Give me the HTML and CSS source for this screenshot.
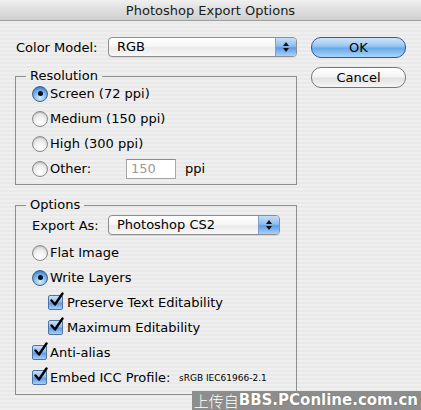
FILE: index.html
```html
<!DOCTYPE html>
<html>
<head>
<meta charset="utf-8">
<link rel="stylesheet" href="styles.css">
</head>
<body>
<div class="window">
  <div class="titlebar">Photoshop Export Options</div>
  <div class="main">
    <div class="left">
      <div class="model-row">
        <span class="model-label">Color Model:</span>
        <div class="popup popup-model">
          <span class="popup-text">RGB</span>
          <span class="popup-arrows"><svg width="8" height="12" viewBox="0 0 8 12"><path d="M4 1 L7 5 L1 5 Z" fill="#111"/><path d="M1 7 L7 7 L4 11 Z" fill="#111"/></svg></span>
        </div>
      </div>

      <fieldset class="group group-res">
        <legend>Resolution</legend>
        <div class="rows">
          <div class="opt"><span class="radio on"></span><span>Screen (72 ppi)</span></div>
          <div class="opt"><span class="radio"></span><span>Medium (150 ppi)</span></div>
          <div class="opt"><span class="radio"></span><span>High (300 ppi)</span></div>
          <div class="opt"><span class="radio"></span><span class="other-label">Other:</span><span class="field">150</span><span class="unit">ppi</span></div>
        </div>
      </fieldset>

      <fieldset class="group group-opt">
        <legend>Options</legend>
        <div class="export-row">
          <span class="export-label">Export As:</span>
          <div class="popup popup-export">
            <span class="popup-text">Photoshop CS2</span>
            <span class="popup-arrows"><svg width="8" height="12" viewBox="0 0 8 12"><path d="M4 1 L7 5 L1 5 Z" fill="#111"/><path d="M1 7 L7 7 L4 11 Z" fill="#111"/></svg></span>
          </div>
        </div>
        <div class="rows rows-opt">
          <div class="opt"><span class="radio"></span><span>Flat Image</span></div>
          <div class="opt"><span class="radio on"></span><span>Write Layers</span></div>
          <div class="opt nested"><span class="check"><svg width="17" height="17" viewBox="0 0 17 17"><path d="M3.5 8.5 L7 12.5 L14.5 1.5" fill="none" stroke="#000" stroke-width="2.4" stroke-linecap="round" stroke-linejoin="round"/></svg></span><span>Preserve Text Editability</span></div>
          <div class="opt nested"><span class="check"><svg width="17" height="17" viewBox="0 0 17 17"><path d="M3.5 8.5 L7 12.5 L14.5 1.5" fill="none" stroke="#000" stroke-width="2.4" stroke-linecap="round" stroke-linejoin="round"/></svg></span><span>Maximum Editability</span></div>
          <div class="opt"><span class="check top"><svg width="17" height="17" viewBox="0 0 17 17"><path d="M3.5 8.5 L7 12.5 L14.5 1.5" fill="none" stroke="#000" stroke-width="2.4" stroke-linecap="round" stroke-linejoin="round"/></svg></span><span>Anti-alias</span></div>
          <div class="opt"><span class="check top"><svg width="17" height="17" viewBox="0 0 17 17"><path d="M3.5 8.5 L7 12.5 L14.5 1.5" fill="none" stroke="#000" stroke-width="2.4" stroke-linecap="round" stroke-linejoin="round"/></svg></span><span class="embed-label">Embed ICC Profile:</span><span class="profile">sRGB IEC61966-2.1</span></div>
        </div>
      </fieldset>
    </div>

    <div class="buttons">
      <div class="btn btn-ok">OK</div>
      <div class="btn btn-cancel">Cancel</div>
    </div>
  </div>
  <div class="watermark"><span class="wm-cjk">上传自</span><span class="wm-latin">BBS.PConline.com.cn</span></div>
</div>
</body>
</html>
```

FILE: styles.css
```css
html, body {
  margin: 0;
  padding: 0;
}

body {
  font-family: "DejaVu Sans", "Noto Sans CJK SC", sans-serif;
  font-size: 13px;
  color: #000;
  background: #ececec;
}

.window {
  position: relative;
  width: 421px;
  height: 410px;
  overflow: hidden;
  background: repeating-linear-gradient(to bottom, #efefef 0, #efefef 2px, #e9e9e9 2px, #e9e9e9 4px);
}

.titlebar {
  height: 20px;
  line-height: 21px;
  text-align: center;
  color: #1a1a1a;
  background: linear-gradient(to bottom, #f0f0f0 0%, #dedede 50%, #cfcfcf 100%);
  border-bottom: 1px solid #9c9c9c;
  border-radius: 5px 5px 0 0;
}

.main {
  display: flex;
  gap: 14px;
  padding: 16px 0 0 15px;
}

.left {
  width: 282px;
  display: flex;
  flex-direction: column;
}

.model-row {
  display: flex;
  align-items: center;
  height: 20px;
}

.model-label {
  width: 92px;
  padding-left: 1px;
}

/* popup buttons */
.popup {
  display: flex;
  height: 18px;
  border: 1px solid #8e8e8e;
  border-radius: 4px;
  background: linear-gradient(to bottom, #ffffff 0%, #f6f6f6 45%, #eaeaea 55%, #f8f8f8 100%);
  box-shadow: 0 1px 0 rgba(0,0,0,0.08);
  overflow: hidden;
}

.popup-model {
  width: 187px;
}

.popup-export {
  width: 170px;
}

.popup-text {
  flex: 1;
  line-height: 18px;
  padding-left: 8px;
}

.popup-arrows {
  width: 20px;
  display: flex;
  align-items: center;
  justify-content: center;
  border-left: 1px solid #7d9fc9;
  background: linear-gradient(to bottom, #c7def7 0%, #8fbdf0 45%, #5f9ce6 55%, #a9d1fa 100%);
}

/* group boxes */
.group {
  margin: 12px 0 0 0;
  padding: 0 0 3px 0;
  min-width: 0;
  border: 1px solid #8e8e8e;
}

.group legend {
  margin-left: 10px;
  padding: 0 4px;
  line-height: 14px;
}

.rows {
  display: flex;
  flex-direction: column;
  margin-top: -2px;
}

.rows-opt {
  margin-top: 3px;
}

.group-opt {
  margin-top: 13px;
  padding-bottom: 4px;
}

.opt {
  height: 25px;
  display: flex;
  align-items: center;
  padding-left: 16px;
}

.opt.nested {
  padding-left: 32px;
}

/* radio */
.radio {
  width: 14px;
  height: 14px;
  border-radius: 50%;
  border: 1px solid #8a8a8a;
  margin-right: 2px;
  background: radial-gradient(circle at 50% 75%, #ffffff 0%, #f2f2f2 40%, #d0d0d0 100%);
  box-shadow: inset 0 1px 1px rgba(0,0,0,0.15);
  position: relative;
}

.radio.on {
  border-color: #3e6491;
  background: radial-gradient(circle at 50% 78%, #d6ecff 0%, #8cc1f3 40%, #4c8fdc 80%, #3a7bc8 100%);
}

.radio.on::after {
  content: "";
  position: absolute;
  left: 4.5px;
  top: 4.5px;
  width: 5px;
  height: 5px;
  border-radius: 50%;
  background: #0d0d0d;
}

/* checkbox */
.check {
  position: relative;
  width: 13px;
  height: 13px;
  border: 1px solid #4f74a3;
  border-radius: 2px;
  margin-right: 4px;
  background: linear-gradient(to bottom, #c9e1f9 0%, #8fbdf0 45%, #5c9be4 55%, #a6d0fa 100%);
}

.check.top {
  margin-right: 3px;
}

.check svg {
  position: absolute;
  left: -1px;
  top: -4px;
}

.other-label {
  width: 76px;
}

.field {
  width: 44px;
  height: 18px;
  line-height: 18px;
  padding-left: 4px;
  border: 1px solid #a6a6a6;
  border-top-color: #8c8c8c;
  background: #ffffff;
  color: #9a9a9a;
}

.unit {
  margin-left: 9px;
}

.export-row {
  height: 24px;
  margin-top: 1px;
  display: flex;
  align-items: center;
  padding-left: 16px;
}

.export-label {
  width: 76px;
}

.embed-label {
  width: 129px;
}

.profile {
  font-size: 9px;
}

/* push buttons */
.buttons {
  display: flex;
  flex-direction: column;
  gap: 9px;
}

.btn {
  width: 93px;
  height: 19px;
  line-height: 19px;
  text-align: center;
  border-radius: 10px;
}

.btn-ok {
  border: 1px solid #34598a;
  background: linear-gradient(to bottom, #d2e6fb 0%, #9cc8f3 40%, #6aa9ea 55%, #a9d6fd 100%);
}

.btn-cancel {
  border: 1px solid #777777;
  background: linear-gradient(to bottom, #ffffff 0%, #f4f4f4 45%, #e2e2e2 55%, #f7f7f7 100%);
}

/* watermark overlay */
.watermark {
  position: absolute;
  left: 192px;
  right: 0;
  bottom: 0;
  height: 19px;
  display: flex;
  align-items: center;
  justify-content: flex-end;
  padding-right: 3px;
  background: #8d8d8d;
  color: #ffffff;
  font-size: 15px;
  line-height: 19px;
  white-space: nowrap;
}

.wm-cjk {
  font-family: "Noto Sans CJK SC", sans-serif;
  font-weight: 300;
}

.wm-latin {
  font-family: "DejaVu Sans", sans-serif;
  font-weight: bold;
  text-shadow: 0 0 1px #555;
}
```
